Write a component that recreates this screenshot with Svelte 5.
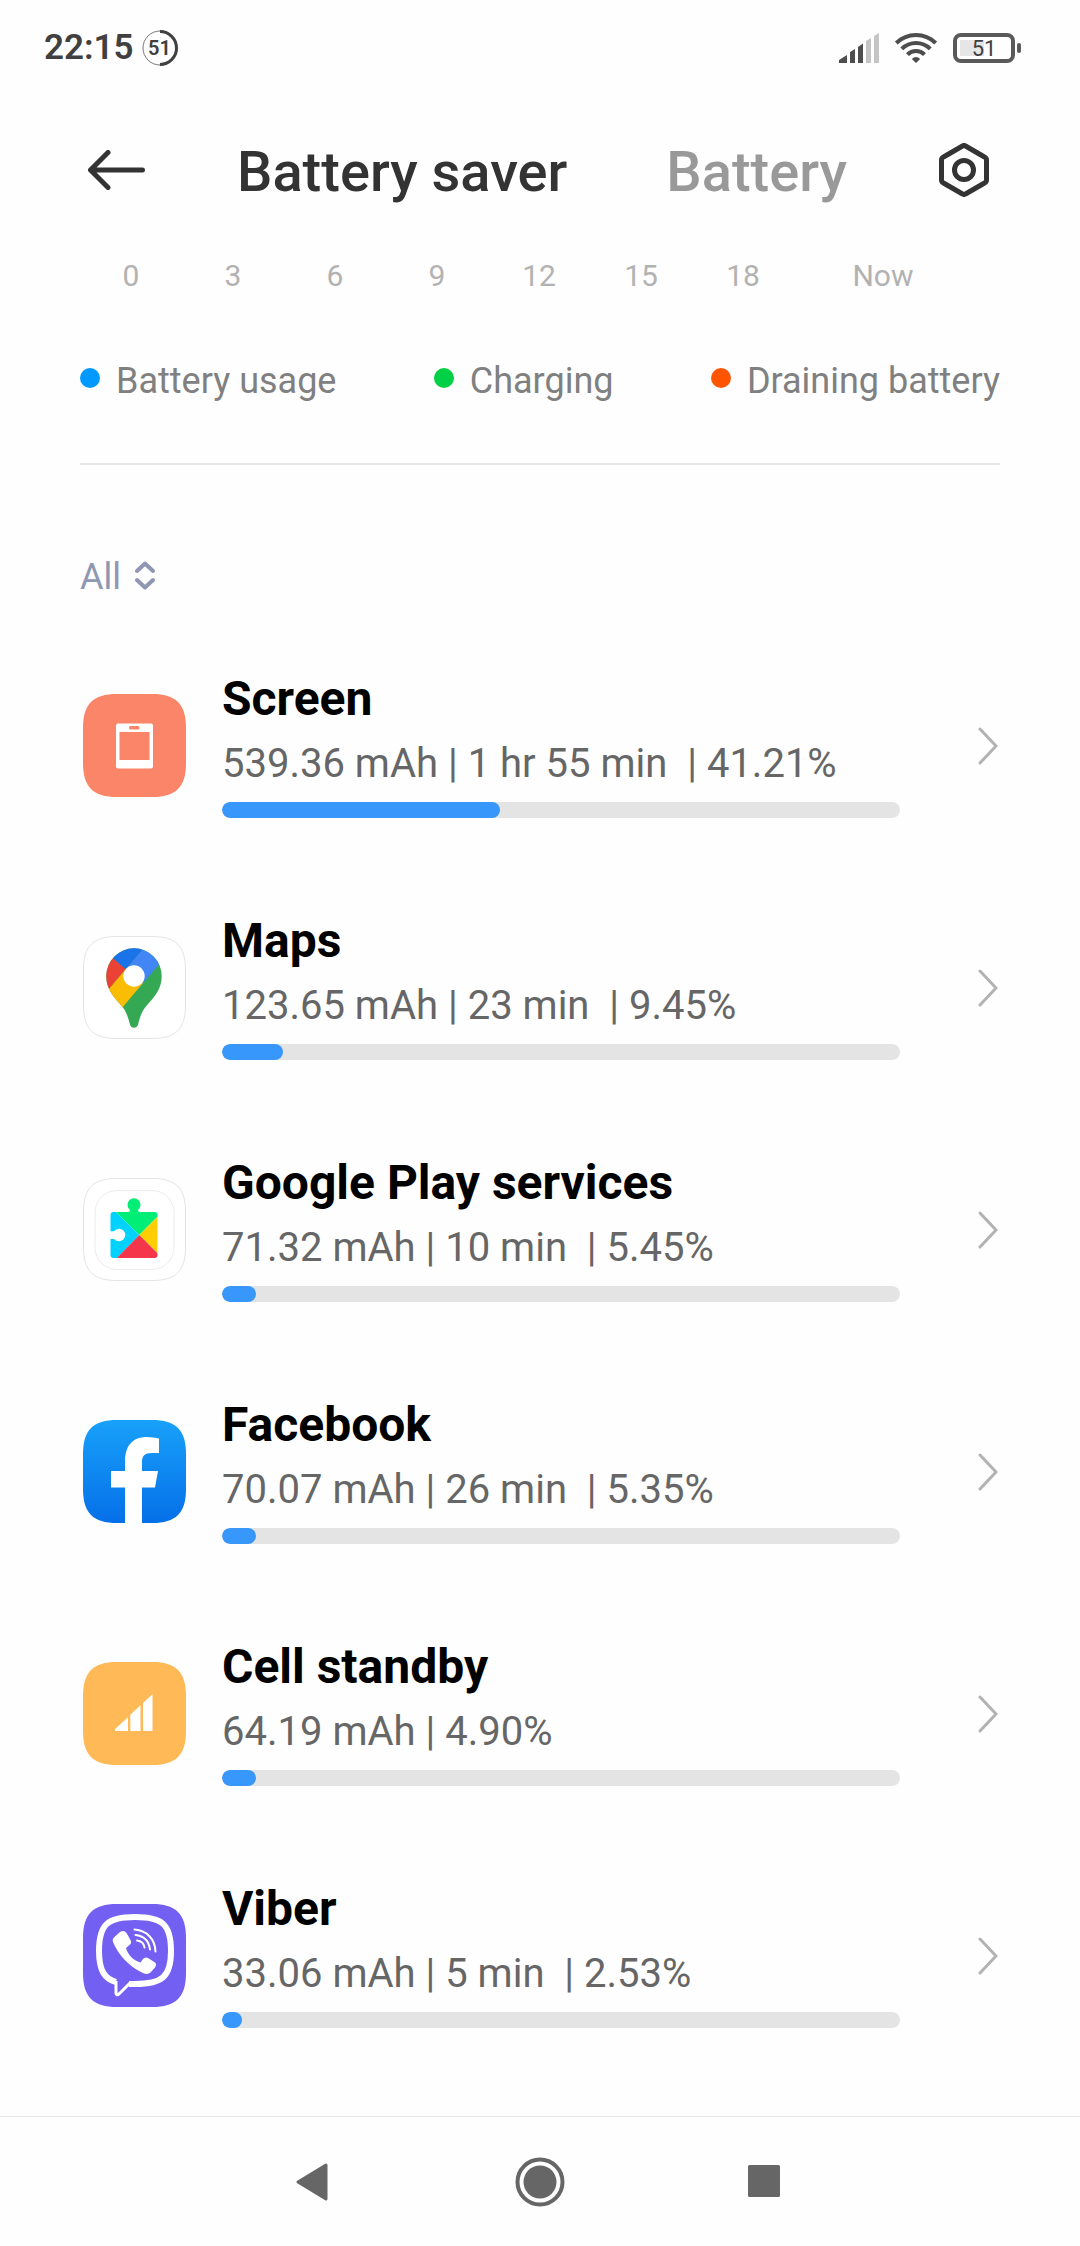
<script>
  const hours = ["0", "3", "6", "9", "12", "15", "18", "Now"];

  const legend = [
    { label: "Battery usage", kind: "usage" },
    { label: "Charging", kind: "charging" },
    { label: "Draining battery", kind: "draining" },
  ];

  const apps = [
    { id: "screen", name: "Screen", mah: "539.36", time: "1 hr 55 min", share: "41.21" },
    { id: "maps", name: "Maps", mah: "123.65", time: "23 min", share: "9.45" },
    { id: "play", name: "Google Play services", mah: "71.32", time: "10 min", share: "5.45" },
    { id: "facebook", name: "Facebook", mah: "70.07", time: "26 min", share: "5.35" },
    { id: "cell", name: "Cell standby", mah: "64.19", time: "", share: "4.90" },
    { id: "viber", name: "Viber", mah: "33.06", time: "5 min", share: "2.53" },
  ];

  let filter = $state("All");
  let tab = $state("saver");

  function details(app) {
    const parts = [`${app.mah} mAh`];
    if (app.time) parts.push(`${app.time} `);
    parts.push(`${app.share}%`);
    return parts.join(" | ");
  }
</script>

<div class="phone">
  <div class="status">
    <div class="status-side">
      <span class="clock">22:15</span>
      <span class="ring">
        <svg viewBox="0 0 36 36" aria-hidden="true">
          <circle cx="18" cy="18" r="17" fill="none" stroke="#777" stroke-width="1" />
          <path d="M18 1.5a16.5 16.5 0 0 1 0 33" fill="none" stroke="#404040" stroke-width="3" />
        </svg>
        <span>51</span>
      </span>
    </div>
    <div class="status-side status-icons">
      <svg class="signal" viewBox="0 0 40 30" aria-hidden="true">
        <path fill="#4d4d4d" d="M0 27l8-5v8H0zM11 19l5-3v14h-5zM19 14l5-3.500v19.500h-5z" />
        <path fill="#c4c4c4" d="M27 8l5-3v25h-5zM35 3l5-3v30h-5z" />
      </svg>
      <svg class="wifi" viewBox="0 0 42 31" aria-hidden="true">
        <g fill="none" stroke="#4d4d4d" stroke-width="4">
          <path d="M1.300 11a28 28 0 0 1 39.400 0" />
          <path d="M6.800 16.800a20 20 0 0 1 28.400 0" />
          <path d="M12.500 22.600a12 12 0 0 1 17 0" />
        </g>
        <path fill="#4d4d4d" d="M21 31l-4.200-4q4.200-4 8.400 0z" />
      </svg>
      <span class="battery">
        <span class="cell">51</span>
        <span class="nub"></span>
      </span>
    </div>
  </div>

  <header>
    <button class="icon-button" aria-label="Back">
      <svg class="back" viewBox="0 0 57 40" aria-hidden="true">
        <path
          d="M20 2.500L2.500 20L20 37.500M3 20H54.500"
          fill="none"
          stroke="#333"
          stroke-width="5"
          stroke-linecap="round"
          stroke-linejoin="round"
        />
      </svg>
    </button>
    <div class="tabs">
      <button class="tab" class:active={tab === "saver"} onclick={() => (tab = "saver")}>
        Battery saver
      </button>
      <button class="tab" class:active={tab === "battery"} onclick={() => (tab = "battery")}>
        Battery
      </button>
    </div>
    <button class="icon-button" aria-label="Settings">
      <svg class="gear" viewBox="0 0 50 54" aria-hidden="true">
        <g fill="none" stroke="#333" stroke-width="5" stroke-linejoin="round">
          <path
            d="M23.500 3Q25 2 26.500 3L45.500 14Q47.500 15 47.500 17V37Q47.500 39 45.500 40L26.500 51Q25 52 23.500 51L4.500 40Q2.500 39 2.500 37V17Q2.500 15 4.500 14Z"
          />
          <circle cx="25" cy="27" r="9.500" />
        </g>
      </svg>
    </button>
  </header>

  <main>
    <div class="hours">
      {#each hours as hour}
        <span>{hour}</span>
      {/each}
    </div>

    <ul class="legend">
      {#each legend as item}
        <li><span class="dot {item.kind}"></span>{item.label}</li>
      {/each}
    </ul>

    <div class="filter">
      <select bind:value={filter} aria-label="Show">
        <option>All</option>
      </select>
      <svg viewBox="0 0 20 29" aria-hidden="true">
        <path
          d="M2 10L10 2.500L18 10M2 19L10 26.500L18 19"
          fill="none"
          stroke="#8f97b2"
          stroke-width="4"
          stroke-linecap="round"
          stroke-linejoin="round"
        />
      </svg>
    </div>

    <ul class="apps">
      {#each apps as app (app.id)}
        <li>
          <a href="#{app.id}">
            <svg class="app-icon" viewBox="0 0 103 103" aria-hidden="true">
              {#if app.id === "screen"}
                <path fill="#fa8568" d="M0 34C0 10 10 0 34 0H69C93 0 103 10 103 34V69C103 93 93 103 69 103H34C10 103 0 93 0 69Z" />
                <rect x="33" y="29.500" width="37" height="45" rx="2" fill="#fff" />
                <rect x="36.500" y="38" width="30" height="28" fill="#fa8568" />
                <rect x="46" y="32" width="10.500" height="3.500" rx="1.500" fill="#fa8568" />
              {:else if app.id === "maps"}
                <clipPath id="pin">
                  <path d="M23.300 40A27.700 27.700 0 0 1 78.700 40C78.700 54 71 61 62.500 71C58.500 76 57 81 55 88.500Q54 91.700 51 91.700Q48 91.700 47 88.500C45 81 43.500 76 39.500 71C31 61 23.300 54 23.300 40Z" />
                </clipPath>
                <path fill="#fff" stroke="#e4e4e4" d="M.5 34C.5 10 10 .5 34 .5H69C93 .5 102.500 10 102.500 34V69C102.500 93 93 102.500 69 102.500H34C10 102.500 .5 93 .5 69Z" />
                <g clip-path="url(#pin)">
                  <rect x="20" y="10" width="62" height="84" fill="#34a853" />
                  <path fill="#ea4335" d="M18 11.500L42.700 33.300L18 62.500Z" />
                  <path fill="#1a73e8" d="M18 11.500V5H67L42.700 33.300Z" />
                  <path fill="#4285f4" d="M67 5L42.700 33.300L55 53L96 5Z" />
                  <path fill="#fbbc04" d="M42.700 33.300L51 40L60 47L40 70.700L30 82L18 62.500Z" />
                </g>
                <circle cx="51" cy="40" r="10.700" fill="#fff" />
              {:else if app.id === "play"}
                <clipPath id="puzzle">
                  <path d="M30.500 34H45.500Q47.500 33.500 46.700 31.500A6.500 6.500 0 1 1 55.300 31.500Q54.500 33.500 56.500 34H71.500Q74.500 34 74.500 37V77Q74.500 80 71.500 80H30.500Q27.500 80 27.500 77V61H31Q33 63.200 36 63.200A6.200 6.200 0 0 0 36 50.800Q33 50.800 31 53.300H27.500V37Q27.500 34 30.500 34Z" />
                </clipPath>
                <path fill="#fff" stroke="#e4e4e4" d="M.5 34C.5 10 10 .5 34 .5H69C93 .5 102.500 10 102.500 34V69C102.500 93 93 102.500 69 102.500H34C10 102.500 .5 93 .5 69Z" />
                <rect x="12" y="12.500" width="79" height="79" rx="22" fill="#fff" stroke="#ececec" />
                <g clip-path="url(#puzzle)">
                  <path fill="#00d2ff" d="M20 21L56.300 57L25 89Z" />
                  <path fill="#00ee76" d="M20 21V15H98L56.300 57Z" />
                  <path fill="#ffce00" d="M98 15V98L56.300 57Z" />
                  <path fill="#f5364a" d="M25 89L56.300 57L90 91Z" />
                </g>
              {:else if app.id === "facebook"}
                <linearGradient id="fb" x1="0" y1="0" x2="0" y2="1">
                  <stop offset="0" stop-color="#18a1fa" />
                  <stop offset="1" stop-color="#056fe8" />
                </linearGradient>
                <path fill="url(#fb)" d="M0 34C0 10 10 0 34 0H69C93 0 103 10 103 34V69C103 93 93 103 69 103H34C10 103 0 93 0 69Z" />
                <path fill="#fff" d="M42 103V67.500H28V51H42V42C42 25 50 17 64 17Q71 17 76 18.500V33H69C61.500 33 59 36 59 42V51H75L72 67.500H59V103Z" />
              {:else if app.id === "cell"}
                <path fill="#ffb957" d="M0 34C0 10 10 0 34 0H69C93 0 103 10 103 34V69C103 93 93 103 69 103H34C10 103 0 93 0 69Z" />
                <path fill="#fff" d="M32 67L45 55.300V69H32ZM47.300 52.700L57.500 43.300V69H47.300ZM60 41L69.500 32.300V69H60Z" />
              {:else}
                <path fill="#7360f2" d="M0 34C0 10 10 0 34 0H69C93 0 103 10 103 34V69C103 93 93 103 69 103H34C10 103 0 93 0 69Z" />
                <path
                  d="M33 78C22 75 16 67 16 47C16 20 25 13 52 13C79 13 88 20 88 47C88 73 79 80 52 80H46"
                  fill="none"
                  stroke="#fff"
                  stroke-width="6"
                />
                <path d="M33 77V89Q33.500 92 36 90L47 79" fill="none" stroke="#fff" stroke-width="3" />
                <path fill="#fff" d="M31.500 33L37 28Q41 25.500 43.500 29L47.500 36Q49 39 46.500 41L43 44C45 51 50 56 57.500 58.500L60 55Q62 52.500 65 54L72 58.500Q74 60.500 72 63.500L67.500 68.500Q64.500 71 60 69C45 62 35 50 30 38Q29 35 31.500 33Z" />
                <g fill="none" stroke="#fff" stroke-width="2" stroke-linecap="round">
                  <path d="M51.500 25.500C64 26.500 72 35 72.500 47.500" />
                  <path d="M52.500 31C61 32 66 37 67 45.500" />
                  <path d="M54 36.500C58.500 37 61 39.500 61.500 43.500" />
                </g>
              {/if}
            </svg>
            <span class="usage-info">
              <span class="name">{app.name}</span>
              <span class="details">{details(app)}</span>
              <span class="bar">
                <span class="fill" style="width: {Math.round(app.share)}%"></span>
              </span>
            </span>
            <svg class="chevron" viewBox="0 0 20 38" aria-hidden="true">
              <path
                d="M2 2L18 19L2 36"
                fill="none"
                stroke="#b2b2b2"
                stroke-width="3"
                stroke-linecap="round"
                stroke-linejoin="round"
              />
            </svg>
          </a>
        </li>
      {/each}
    </ul>
  </main>

  <nav>
    <button aria-label="Back">
      <svg viewBox="0 0 50 50" aria-hidden="true">
        <path d="M9 25L37 8V42Z" fill="#666" stroke="#666" stroke-width="3" stroke-linejoin="round" />
      </svg>
    </button>
    <button aria-label="Home">
      <svg viewBox="0 0 50 50" aria-hidden="true">
        <circle cx="25" cy="25" r="22.500" fill="none" stroke="#666" stroke-width="4" />
        <circle cx="25" cy="25" r="16.500" fill="#666" />
      </svg>
    </button>
    <button aria-label="Recent apps">
      <svg viewBox="0 0 50 50" aria-hidden="true">
        <rect x="7" y="8" width="32" height="32" rx="1.500" fill="#666" />
      </svg>
    </button>
  </nav>
</div>

<style>
  :global(body) {
    background: #fefefe;
  }
  .phone {
    min-height: 100vh;
    display: flex;
    flex-direction: column;
    font-family: Roboto, "Noto Sans", sans-serif;
  }
  button {
    padding: 0;
    border: 0;
    background: none;
    font: inherit;
    cursor: pointer;
  }
  svg {
    display: block;
    flex: none;
  }
  ul {
    list-style: none;
    margin: 0;
    padding: 0;
  }

  .status {
    display: flex;
    justify-content: space-between;
    align-items: center;
    height: 95px;
    padding: 0 59px 0 44px;
    color: #404040;
  }
  .status-side {
    display: flex;
    align-items: center;
    gap: 8px;
  }
  .status-icons {
    gap: 16px;
  }
  .clock {
    font-size: 35px;
    line-height: 42px;
    font-weight: 600;
  }
  .ring {
    display: grid;
    place-items: center;
    font-size: 20px;
    line-height: 24px;
    font-weight: 600;
  }
  .ring > * {
    grid-area: 1 / 1;
  }
  .ring svg {
    width: 36px;
    height: 36px;
  }
  .signal {
    width: 40px;
    height: 30px;
  }
  .wifi {
    width: 42px;
    height: 31px;
  }
  .battery {
    display: flex;
    align-items: center;
    gap: 2px;
  }
  .cell {
    box-sizing: border-box;
    width: 62px;
    height: 30px;
    border: 4px solid #595959;
    border-radius: 8px;
    background: linear-gradient(90deg, #e6e6e6 50%, transparent 50%) 3px 3px / 48px 16px no-repeat;
    font-size: 22px;
    line-height: 24px;
    text-align: center;
  }
  .nub {
    width: 4px;
    height: 10px;
    border-radius: 2px;
    background: #595959;
  }

  header {
    display: flex;
    align-items: center;
    justify-content: space-between;
    height: 149px;
    padding: 0 91px 0 88px;
  }
  .back {
    width: 57px;
    height: 40px;
  }
  .gear {
    width: 50px;
    height: 54px;
  }
  .tabs {
    display: flex;
    gap: 99px;
    padding-top: 4px;
  }
  .tab {
    font-size: 56px;
    line-height: 64px;
    font-weight: 500;
    color: #999;
  }
  .tab.active {
    color: #333;
  }

  main {
    flex: 1;
    padding: 14px 80px 40px;
  }
  .hours {
    display: grid;
    grid-template-columns: repeat(7, 102fr) 178fr;
    padding-right: 28px;
    font-size: 30px;
    line-height: 36px;
    text-align: center;
    color: #b2b2b2;
  }
  .legend {
    display: flex;
    justify-content: space-between;
    padding: 65px 0 60px;
    border-bottom: 2px solid #e6e6e6;
    font-size: 36px;
    line-height: 44px;
    color: #808080;
  }
  .legend li {
    display: flex;
    align-items: center;
    gap: 16px;
  }
  .dot {
    width: 20px;
    height: 20px;
    margin-bottom: 6px;
    border-radius: 50%;
  }
  .usage {
    background: #0099ff;
  }
  .charging {
    background: #00d045;
  }
  .draining {
    background: #ff5500;
  }

  .filter {
    position: relative;
    width: fit-content;
    margin: 90px 0 25px;
  }
  select {
    display: block;
    appearance: none;
    field-sizing: content;
    padding: 0 34px 0 0;
    border: 0;
    background: none;
    font: 36px/44px Roboto, "Noto Sans", sans-serif;
    color: #8f97b2;
  }
  .filter svg {
    position: absolute;
    right: 0;
    top: 6px;
    width: 20px;
    height: 29px;
    pointer-events: none;
  }

  .apps a {
    display: flex;
    align-items: center;
    padding: 47px 2px 46px 3px;
    color: inherit;
    text-decoration: none;
  }
  .app-icon {
    width: 103px;
    height: 103px;
  }
  .usage-info {
    flex: 1;
    display: flex;
    flex-direction: column;
    margin: 0 78px 0 36px;
    padding-bottom: 2px;
  }
  .name {
    font-size: 48px;
    line-height: 56px;
    font-weight: 700;
    color: #000;
  }
  .details {
    margin: 11px 0 12px;
    font-size: 40px;
    line-height: 52px;
    white-space: pre;
    color: #666;
  }
  .bar {
    height: 16px;
    border-radius: 8px;
    background: #e4e4e4;
    overflow: hidden;
  }
  .fill {
    display: block;
    height: 100%;
    border-radius: 8px;
    background: #3897fa;
  }
  .chevron {
    width: 20px;
    height: 38px;
  }

  nav {
    display: flex;
    justify-content: center;
    border-top: 1px solid #e6e6e6;
  }
  nav button {
    display: flex;
    justify-content: center;
    align-items: center;
    width: 226px;
    height: 129px;
  }
  nav svg {
    width: 50px;
    height: 50px;
  }
</style>
